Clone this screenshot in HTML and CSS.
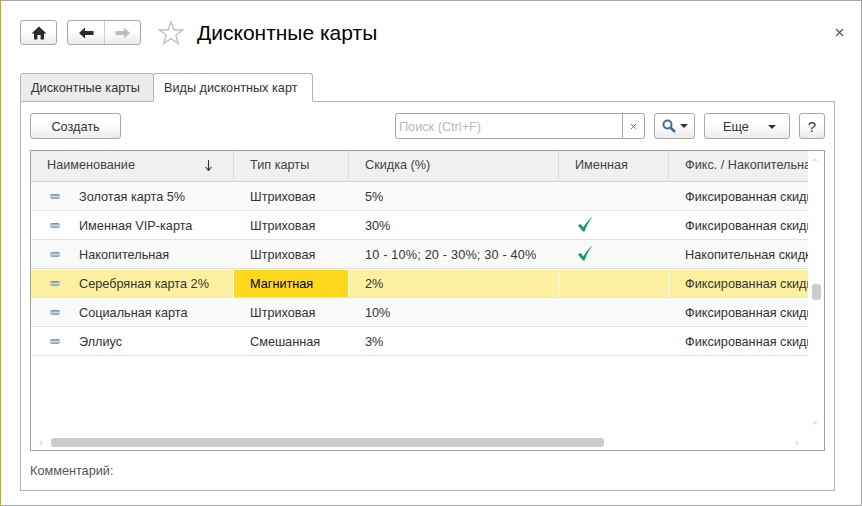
FILE: index.html
```html
<!DOCTYPE html>
<html lang="ru">
<head>
<meta charset="utf-8">
<title>Дисконтные карты</title>
<link rel="stylesheet" href="styles.css">
</head>
<body>
<div class="window">
  <header class="head">
    <button class="btn home" aria-label="Домой">
      <svg width="16" height="14" viewBox="0 0 16 14"><path d="M8 .5 15.5 7.5H13V13.5H9.6V9H6.4V13.5H3V7.5H.5Z" fill="#2b2b2b"/></svg>
    </button>
    <div class="btn nav">
      <span class="nav-part">
        <svg width="15" height="12" viewBox="0 0 15 12"><path d="M0 6 6 .5V4H14.500V8H6V11.500Z" fill="#2b2b2b"/></svg>
      </span>
      <span class="nav-part next">
        <svg width="15" height="12" viewBox="0 0 15 12"><path d="M15 6 9 .5V4H.5V8H9V11.500Z" fill="#bdbdbd"/></svg>
      </span>
    </div>
    <svg class="star" width="26" height="26" viewBox="0 0 26 26"><path d="M13 2 16 10H24.500L17.800 15.200 20.200 23.500 13 18.600 5.800 23.500 8.200 15.200 1.500 10H10Z" fill="#fff" stroke="#bdbdbd" stroke-width="1.300"/></svg>
    <h1 class="title">Дисконтные карты</h1>
    <svg class="close" width="9" height="9" viewBox="0 0 9 9"><path d="M1 1 8 8M8 1 1 8" stroke="#555" stroke-width="1.200"/></svg>
  </header>

  <nav class="tabs">
    <span class="tab">Дисконтные карты</span>
    <span class="tab active">Виды дисконтных карт</span>
    <span class="tab-rest"></span>
  </nav>

  <section class="panel">
    <div class="toolbar">
      <button class="btn create">Создать</button>
      <div class="search">
        <span class="search-text">Поиск (Ctrl+F)</span>
        <span class="search-clear"><svg width="7" height="7" viewBox="0 0 7 7"><path d="M1 1 6 6M6 1 1 6" stroke="#777" stroke-width="1"/></svg></span>
      </div>
      <button class="btn find">
        <svg width="15" height="14" viewBox="0 0 15 14"><circle cx="5.500" cy="5.500" r="4" fill="none" stroke="#3f6d96" stroke-width="2"/><path d="M8.500 8.500 13 13" stroke="#3f6d96" stroke-width="2.500"/></svg>
        <i class="caret"></i>
      </button>
      <button class="btn more"><span>Еще</span><i class="caret"></i></button>
      <button class="btn help">?</button>
    </div>

    <div class="grid">
      <div class="grid-head">
        <div class="hc c1"><span>Наименование</span><svg class="sort" width="7" height="11" viewBox="0 0 7 11"><path d="M3.500 0V10M.5 7 3.500 10.500 6.500 7" fill="none" stroke="#333" stroke-width="1.100"/></svg></div>
        <div class="hc c2">Тип карты</div>
        <div class="hc c3">Скидка (%)</div>
        <div class="hc c4">Именная</div>
        <div class="hc c5">Фикс. / Накопительная</div>
      </div>

      <div class="row odd">
        <div class="cell c1"><i class="dash"></i>Золотая карта 5%</div>
        <div class="cell c2">Штриховая</div>
        <div class="cell c3">5%</div>
        <div class="cell c4"></div>
        <div class="cell c5">Фиксированная скидка</div>
      </div>
      <div class="row">
        <div class="cell c1"><i class="dash"></i>Именная VIP-карта</div>
        <div class="cell c2">Штриховая</div>
        <div class="cell c3">30%</div>
        <div class="cell c4"><svg class="check" width="15" height="16" viewBox="0 0 15 16"><path d="M0 9.500 2.500 8 5.500 11.500C7.500 7.500 10.500 3.500 14.500 .5 11 5 8.500 10 6.500 15.500H5Z" fill="#0f9d58"/></svg></div>
        <div class="cell c5">Фиксированная скидка</div>
      </div>
      <div class="row odd">
        <div class="cell c1"><i class="dash"></i>Накопительная</div>
        <div class="cell c2">Штриховая</div>
        <div class="cell c3 spaced">10 - 10%; 20 - 30%; 30 - 40%</div>
        <div class="cell c4"><svg class="check" width="15" height="16" viewBox="0 0 15 16"><path d="M0 9.500 2.500 8 5.500 11.500C7.500 7.500 10.500 3.500 14.500 .5 11 5 8.500 10 6.500 15.500H5Z" fill="#0f9d58"/></svg></div>
        <div class="cell c5">Накопительная скидка</div>
      </div>
      <div class="row selected">
        <div class="cell c1"><i class="dash"></i>Серебряная карта 2%</div>
        <div class="cell c2 current">Магнитная</div>
        <div class="cell c3">2%</div>
        <div class="cell c4"></div>
        <div class="cell c5">Фиксированная скидка</div>
      </div>
      <div class="row odd">
        <div class="cell c1"><i class="dash"></i>Социальная карта</div>
        <div class="cell c2">Штриховая</div>
        <div class="cell c3">10%</div>
        <div class="cell c4"></div>
        <div class="cell c5">Фиксированная скидка</div>
      </div>
      <div class="row">
        <div class="cell c1"><i class="dash"></i>Эллиус</div>
        <div class="cell c2">Смешанная</div>
        <div class="cell c3">3%</div>
        <div class="cell c4"></div>
        <div class="cell c5">Фиксированная скидка</div>
      </div>

      <i class="sb-v-thumb"></i>
      <i class="arrow up"></i>
      <i class="arrow down"></i>
      <i class="sb-h-thumb"></i>
      <i class="arrow left"></i>
      <i class="arrow right"></i>
    </div>

    <div class="comment">Комментарий:</div>
  </section>
</div>
</body>
</html>
```

FILE: styles.css
```css
* { box-sizing: border-box; }
html, body { margin: 0; padding: 0; }
body {
  width: 862px;
  height: 506px;
  font-family: "Liberation Sans", Arial, sans-serif;
  font-size: 12.700px;
  color: #333;
  background: #fff;
  overflow: hidden;
}
.window {
  width: 862px;
  height: 506px;
  border: 1px solid #a6a6a6;
  border-left-color: #c8a80a;
  padding: 19px 26px 0 19px;
  display: flex;
  flex-direction: column;
}

.head {
  height: 25px;
  display: flex;
  align-items: center;
  position: relative;
}
.btn {
  font: inherit;
  color: #333;
  padding: 0;
  border: 1px solid #a9a9a9;
  border-radius: 3px;
  background: linear-gradient(#fff, #fff 40%, #ececec);
  display: flex;
  align-items: center;
  justify-content: center;
}
.home { width: 37px; height: 25px; }
.nav { width: 74px; height: 25px; margin-left: 10px; }
.nav-part {
  width: 36px;
  height: 23px;
  display: flex;
  align-items: center;
  justify-content: center;
}
.nav-part.next { width: 36px; border-left: 1px solid #d0d0d0; }
.star { margin-left: 17px; flex: none; }
.title {
  margin: 0 0 0 13px;
  font-size: 21px;
  font-weight: 400;
  color: #000;
}
.close {
  position: absolute;
  left: 815px;
  top: 8px;
}

.tabs {
  display: flex;
  height: 29px;
  margin-top: 28px;
  width: 815px;
}
.tab {
  width: 134px;
  height: 29px;
  border: 1px solid #b4b4b4;
  border-radius: 3px 3px 0 0;
  background: #ececec;
  padding-left: 10px;
  line-height: 28px;
}
.tab.active {
  width: 160px;
  margin-left: -1px;
  background: #fff;
  border-bottom-color: #fff;
  position: relative;
  padding-left: 10px;
}
.tab-rest { flex: 1; border-bottom: 1px solid #b4b4b4; }

.panel {
  width: 815px;
  height: 389px;
  border: 1px solid #b4b4b4;
  border-top: 0;
  padding: 11px 9px 0 9px;
}
.toolbar {
  height: 26px;
  display: flex;
  align-items: stretch;
}
.create { width: 91px; padding-top: 1px; }
.search {
  width: 250px;
  margin-left: 274px;
  display: flex;
  border: 1px solid #a9a9a9;
  border-radius: 3px;
  background: #fff;
}
.search-text {
  flex: 1;
  padding-left: 3px;
  line-height: 26px;
  color: #b9b9b9;
}
.search-clear {
  width: 22px;
  border-left: 1px solid #a9a9a9;
  display: flex;
  align-items: center;
  justify-content: center;
}
.find { width: 41px; margin-left: 9px; gap: 3px; }
.more { width: 86px; margin-left: 9px; justify-content: flex-start; padding: 1px 0 0 18px; }
.more .caret { margin-left: 19px; }
.help { width: 26px; margin-left: 9px; font-size: 15px; }
.caret {
  width: 0;
  height: 0;
  border: 4px solid transparent;
  border-top: 4px solid #333;
  border-bottom: 0;
}

.grid {
  position: relative;
  width: 795px;
  height: 301px;
  margin-top: 11px;
  border: 1px solid #a0a0a0;
  overflow: hidden;
}
.grid-head {
  display: flex;
  width: 777px;
  height: 31px;
  background: #f0f0f0;
  border-bottom: 1px solid #d4d4d4;
  overflow: hidden;
}
.hc {
  flex: none;
  height: 30px;
  padding-left: 16px;
  line-height: 29px;
  border-right: 1px solid #dcdcdc;
  white-space: nowrap;
  display: flex;
  color: #444;
}
.sort { margin: 9px 0 0 70px; flex: none; }
.c1 { width: 203px; }
.c2 { width: 115px; }
.c3 { width: 210px; }
.c4 { width: 110px; }
.c5 { width: 139px; border-right: 0; }

.row {
  display: flex;
  width: 777px;
  height: 29px;
  border-bottom: 1px solid #e2e2e2;
}
.row.odd { background: #fafafa; }
.cell {
  flex: none;
  height: 28px;
  padding: 1px 0 0 16px;
  line-height: 28px;
  white-space: nowrap;
  overflow: hidden;
  display: flex;
  align-items: center;
}
.c1.cell { padding-left: 19px; }
.spaced { letter-spacing: .18px; }
.selected .cell {
  height: 27px;
  margin-top: 1px;
  padding-top: 0;
  background: #fdf0a0;
  border-right: 1px solid #fff;
}
.selected .c5 { border-right: 0; }
.selected .current { background: #fcd91c; color: #000; }
.dash {
  width: 10px;
  height: 5px;
  margin: -1px 19px 0 0;
  flex: none;
  border-radius: 2px;
  background: linear-gradient(#5f85a6, #c6d5e2 50%, #7d9ab3);
}
.check { margin: -4px 0 0 3px; }

.sb-v-thumb {
  position: absolute;
  left: 781px;
  top: 133px;
  width: 9px;
  height: 16px;
  border-radius: 3px;
  background: #cbcbcb;
}
.sb-h-thumb {
  position: absolute;
  left: 20px;
  top: 287px;
  width: 553px;
  height: 9px;
  border-radius: 3px;
  background: #cbcbcb;
}
.arrow { position: absolute; width: 0; height: 0; border: 3px solid transparent; }
.up { left: 781px; top: 7px; border-top: 0; border-bottom-color: #e2e2e2; }
.down { left: 781px; top: 271px; border-bottom: 0; border-top-color: #e2e2e2; }
.left { left: 8px; top: 289px; border-left: 0; border-right-color: #e2e2e2; }
.right { left: 765px; top: 289px; border-right: 0; border-left-color: #e2e2e2; }

.comment { margin-top: 13px; line-height: 14px; color: #555; }
```
